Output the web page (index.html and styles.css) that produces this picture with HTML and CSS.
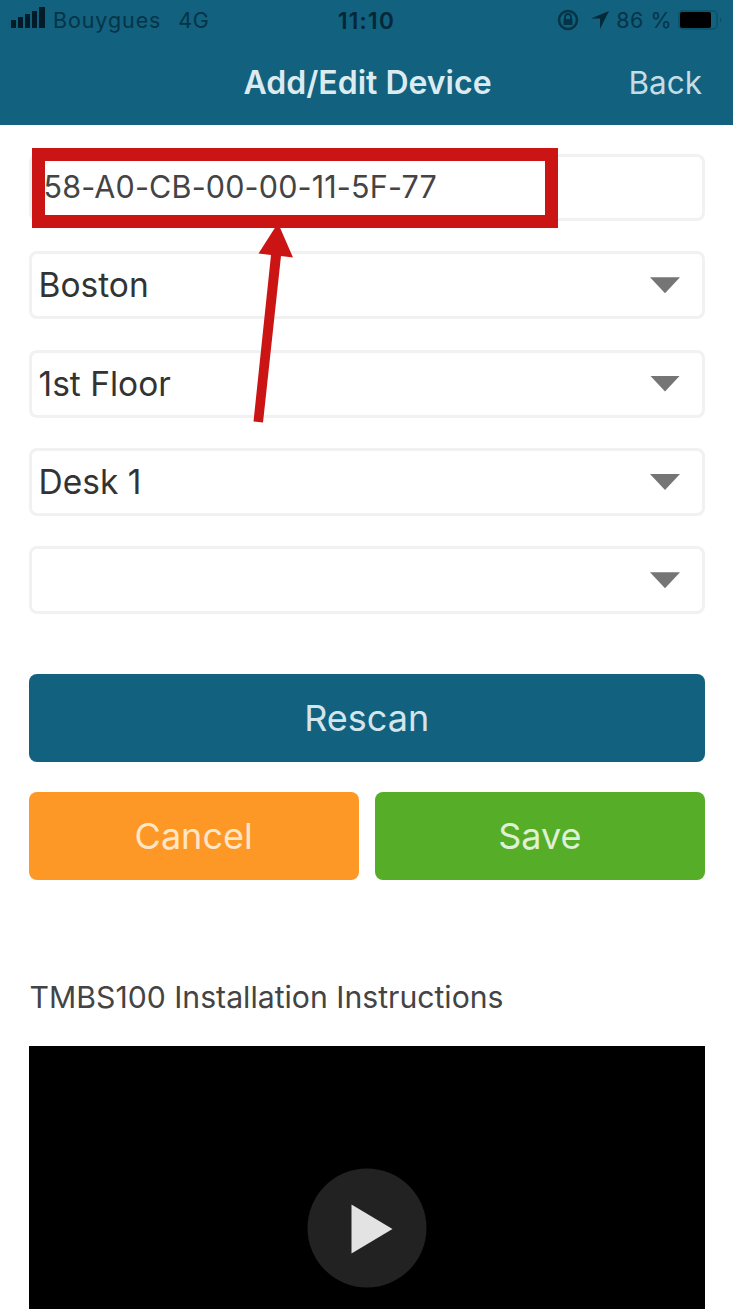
FILE: index.html
```html
<!DOCTYPE html>
<html lang="en">
<head>
<meta charset="utf-8">
<title>Add/Edit Device</title>
<link rel="stylesheet" href="styles.css">
</head>
<body>
<div class="screen">
  <header class="header">
    <div class="status">
      <div class="status-left">
        <svg class="signal" width="36" height="22" viewBox="0 0 36 22"><path d="M0 13h5v8H0zM7 10h5v11H7zM14 7h5v14h-5zM21 4h5v17h-5zM28 0h6v21h-6z"/></svg>
        <span class="carrier">Bouygues</span>
        <span class="network">4G</span>
      </div>
      <span class="clock">11:10</span>
      <div class="status-right">
        <svg class="lock" width="22" height="22" viewBox="0 0 22 22"><circle cx="11" cy="11" r="9" fill="none" stroke="#063447" stroke-width="2.5"/><path d="M6.500 10h9v6h-9z" fill="#063447"/><path d="M8 10V8a3 3 0 0 1 6 0v2" fill="none" stroke="#063447" stroke-width="2"/></svg>
        <svg class="location" width="20" height="20" viewBox="0 0 20 20"><path d="M19 1L1 8.500h9V19z" fill="#042a3a"/></svg>
        <span class="percent">86 %</span>
        <svg class="battery" width="46" height="20" viewBox="0 0 46 20"><rect x="1" y="1" width="38" height="18" rx="4" fill="none" stroke="#0b526c" stroke-width="1.500"/><rect x="2" y="2" width="31" height="16" rx="2"/><path d="M42 7q3 3 0 6z" fill="#0b526c"/></svg>
      </div>
    </div>
    <div class="nav">
      <h1 class="title">Add/Edit Device</h1>
      <a class="back">Back</a>
    </div>
  </header>
  <main class="content">
    <div class="form">
      <div class="field"><span class="device-id">58-A0-CB-00-00-11-5F-77</span></div>
      <div class="field"><span>Boston</span><i class="caret"></i></div>
      <div class="field"><span>1st Floor</span><i class="caret"></i></div>
      <div class="field"><span>Desk 1</span><i class="caret"></i></div>
      <div class="field"><i class="caret"></i></div>
    </div>
    <div class="actions">
      <div class="button rescan"><span>Rescan</span></div>
      <div class="button cancel"><span>Cancel</span></div>
      <div class="button save"><span>Save</span></div>
    </div>
    <h2 class="caption"><span>TMBS100 Installation Instructions</span></h2>
    <div class="video">
      <svg class="play" width="120" height="120" viewBox="0 0 120 120"><circle cx="60" cy="60" r="59.500" fill="#222"/><path d="M44.500 36.500v49L85.500 61z" fill="#e3e3e3"/></svg>
    </div>
  </main>
  <svg class="callout" width="734" height="440" viewBox="0 0 734 440"><rect x="38.500" y="154.500" width="513" height="67" fill="none" stroke="#cb1515" stroke-width="13"/><path d="M278 223L258.500 253.500 271 255 253.500 421.500 263 422.500 281 256 293 257.500z" fill="#cb1515"/></svg>
</div>
</body>
</html>
```

FILE: styles.css
```css
* { box-sizing: border-box; }
body { margin: 0; background: #fff; font-family: Inter, "Liberation Sans", sans-serif; }
.screen { position: relative; width: 734px; height: 1310px; overflow: hidden; }
.header { width: 733px; height: 125px; background: #11617f; }
.status { display: grid; grid-template-columns: 1fr auto 1fr; height: 40px; align-items: center; font-size: 21.5px; color: #063447; }
.status-left, .status-right { display: flex; align-items: center; }
.signal { margin-left: 11px; margin-top: -4px; fill: #011c28; }
.carrier { margin-left: 6px; letter-spacing: .9px; }
.network { margin-left: 17px; letter-spacing: .5px; }
.clock { font-size: 22.5px; font-weight: 600; color: #032736; letter-spacing: 1.3px; }
.status-right { justify-content: flex-end; padding-right: 9px; }
.location { margin-left: 11px; }
.percent { margin-left: 6px; letter-spacing: .5px; }
.battery { margin-left: 6px; }
.nav { display: grid; grid-template-columns: 1fr auto 1fr; height: 84px; align-items: center; }
.title { grid-column: 2; margin: 0 0 0 2px; font-size: 32px; font-weight: 600; color: #dcebf0; }
.back { justify-self: end; margin-right: 31px; font-size: 31.5px; color: #c4dce4; }
.content { padding: 28.5px 29px 0 28.5px; }
.form { display: grid; grid-template-rows: 67.5px repeat(4, 68px); row-gap: 30.3px; }
.field { display: flex; align-items: center; justify-content: space-between; padding: 0 22px 0 7px; border: 3px solid #f1f1f1; border-radius: 8px; font-size: 33.5px; line-height: 40px; color: #333; }
.device-id { margin: -1px 0 0 5px; font-size: 30.5px; letter-spacing: .15px; color: #444; }
.caret { width: 30px; height: 16px; margin-left: auto; background: #757575; clip-path: polygon(0 0, 100% 0, 50% 100%); }
.actions { display: grid; grid-template-columns: 1fr 1fr; grid-auto-rows: 88.5px; gap: 29.5px 16px; margin-top: 59.5px; }
.button { display: flex; align-items: center; justify-content: center; border-radius: 8px; font-size: 36px; }
.rescan { grid-column: 1 / -1; background: #11617f; color: #d3e5eb; }
.cancel { background: #fd9827; color: #ffe6c7; }
.save { background: #56ad27; color: #def0d5; }
.caption { margin: 98px 0 0 1px; height: 68px; font-size: 30.2px; font-weight: 400; line-height: 38px; color: #444; }
.video { display: flex; justify-content: center; height: 263px; padding-top: 122px; background: #000; }
.callout { position: absolute; left: 0; top: 0; }
```
